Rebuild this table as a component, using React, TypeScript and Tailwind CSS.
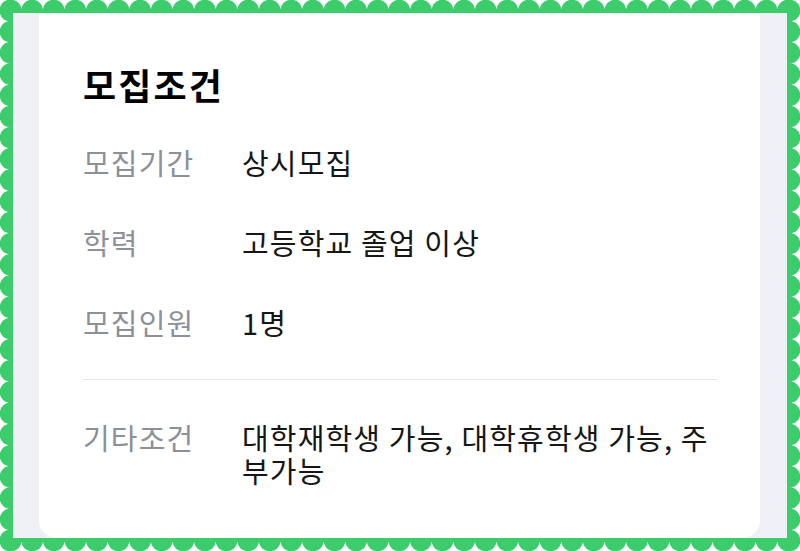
import React from 'react';

const GREEN = '#3ccc6c';

const rows = [
  { label: '모집기간', value: '상시모집' },
  { label: '학력', value: '고등학교 졸업 이상' },
  { label: '모집인원', value: '1명' },
];

function ScallopFrame() {
  const top = Array.from({ length: 37 }, (_, i) => 10.5 + i * 21.6);
  const side = Array.from({ length: 26 }, (_, i) => 10.5 + i * 21.2);
  return (
    <svg className="absolute inset-0" width="800" height="551" viewBox="0 0 800 551">
      <rect x="9" y="9" width="782" height="533" fill={GREEN} />
      {top.map(x => (
        <React.Fragment key={`t${x}`}>
          <circle cx={x} cy="10.5" r="10.8" fill={GREEN} />
          <circle cx={x} cy="540.5" r="10.8" fill={GREEN} />
        </React.Fragment>
      ))}
      {side.map(y => (
        <React.Fragment key={`s${y}`}>
          <circle cx="10.5" cy={y} r="10.8" fill={GREEN} />
          <circle cx="789.5" cy={y} r="10.8" fill={GREEN} />
        </React.Fragment>
      ))}
    </svg>
  );
}

export default function App() {
  return (
    <div
      className="relative h-[551px] w-[800px] overflow-hidden bg-white"
      style={{ fontFamily: '"Noto Sans CJK KR", "Noto Sans", sans-serif' }}
    >
      <ScallopFrame />

      <div className="relative h-full p-[13px]">
        <div className="h-full overflow-hidden bg-[#eff0f5] pl-[26px] pr-[27px]">
          {/* Card */}
          <div className="h-full rounded-b-[18px] bg-white pl-[44px] pr-[43px] pt-[50px]">
            <h2 className="text-[36px] font-bold leading-[42px] tracking-[0.06em] text-black">모집조건</h2>

            <div className="mt-[41px] flex flex-col gap-[47px]">
              {rows.map(row => (
                <div key={row.label} className="flex text-[29px] leading-[33px] tracking-[0.04em]">
                  <div className="w-[159px] shrink-0 text-[#8b9099]">{row.label}</div>
                  <div className="text-[#161616]">{row.value}</div>
                </div>
              ))}
            </div>

            <div className="mt-[40px] h-px bg-[#e6e7ea]" />

            <div className="mt-[41px] flex text-[29px] leading-[33px] tracking-[0.04em]">
              <div className="w-[159px] shrink-0 text-[#8b9099]">기타조건</div>
              <div className="flex-1 break-all text-[#161616]">
                대학재학생 가능, 대학휴학생 가능, 주부가능
              </div>
            </div>
          </div>
        </div>
      </div>
    </div>
  );
}
